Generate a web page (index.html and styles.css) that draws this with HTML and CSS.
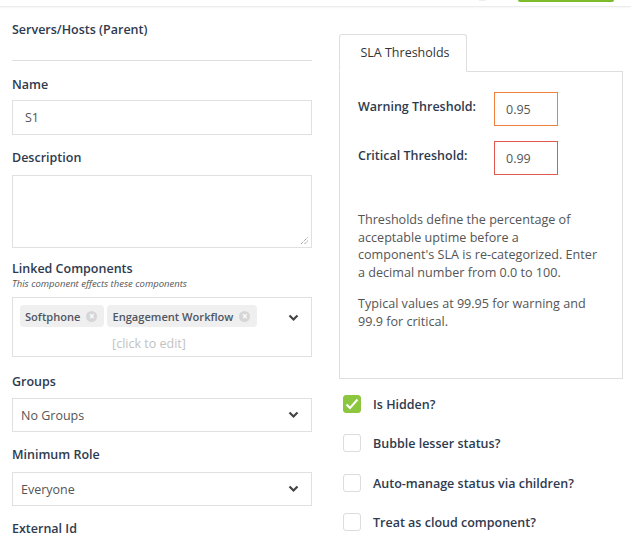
FILE: index.html
```html
<!DOCTYPE html>
<html>
<head>
<meta charset="utf-8">
<link rel="stylesheet" href="styles.css">
</head>
<body>
<div class="topbar">
  <span class="top-ghost"></span>
  <span class="top-btn"></span>
</div>
<div class="page">
  <div class="col-left">
    <div class="title">Servers/Hosts (Parent)</div>
    <div class="rule"></div>
    <div class="field f-name">
      <div class="label">Name</div>
      <div class="input">S1</div>
    </div>
    <div class="field f-desc">
      <div class="label">Description</div>
      <div class="textarea">
        <svg class="grip" width="9" height="9" viewBox="0 0 9 9"><path d="M1 8 L8 1 M4.5 8 L8 4.5" stroke="#777" stroke-width="1" stroke-dasharray="1 1" fill="none"/></svg>
      </div>
    </div>
    <div class="field f-linked">
      <div class="label">Linked Components</div>
      <div class="sublabel">This component effects these components</div>
      <div class="multi">
        <div class="chips">
          <span class="chip">Softphone <span class="chip-x">&#215;</span></span>
          <span class="chip">Engagement Workflow <span class="chip-x">&#215;</span></span>
        </div>
        <div class="click-edit">[click to edit]</div>
        <svg class="chev chev-multi" width="11" height="8" viewBox="0 0 11 8"><path d="M1.5 1.5 L5.5 5.5 L9.5 1.5" stroke="#444" stroke-width="2.2" fill="none"/></svg>
      </div>
    </div>
    <div class="field f-groups">
      <div class="label">Groups</div>
      <div class="select">
        <span>No Groups</span>
        <svg class="chev" width="11" height="8" viewBox="0 0 11 8"><path d="M1.5 1.5 L5.5 5.5 L9.5 1.5" stroke="#444" stroke-width="2.2" fill="none"/></svg>
      </div>
    </div>
    <div class="field f-role">
      <div class="label">Minimum Role</div>
      <div class="select">
        <span>Everyone</span>
        <svg class="chev" width="11" height="8" viewBox="0 0 11 8"><path d="M1.5 1.5 L5.5 5.5 L9.5 1.5" stroke="#444" stroke-width="2.2" fill="none"/></svg>
      </div>
    </div>
    <div class="field f-ext">
      <div class="label">External Id</div>
    </div>
  </div>
  <div class="col-right">
    <div class="tabs">
      <div class="tab">SLA Thresholds</div>
    </div>
    <div class="panel">
      <div class="thr-row">
        <div class="thr-label">Warning Threshold:</div>
        <div class="thr-input warn">0.95</div>
      </div>
      <div class="thr-row thr-row2">
        <div class="thr-label">Critical Threshold:</div>
        <div class="thr-input crit">0.99</div>
      </div>
      <p class="help">Thresholds define the percentage of<br>acceptable uptime before a<br>component's SLA is re-categorized. Enter<br>a decimal number from 0.0 to 100.</p>
      <p class="help help2">Typical values at 99.95 for warning and<br>99.9 for critical.</p>
    </div>
    <div class="checks">
      <div class="check-row">
        <span class="box checked"><svg width="14" height="12" viewBox="0 0 14 12"><path d="M1.5 6.5 L5 10 L12.5 1.5" stroke="#fff" stroke-width="2" fill="none"/></svg></span>
        <span class="check-label">Is Hidden?</span>
      </div>
      <div class="check-row">
        <span class="box"></span>
        <span class="check-label">Bubble lesser status?</span>
      </div>
      <div class="check-row">
        <span class="box"></span>
        <span class="check-label">Auto-manage status via children?</span>
      </div>
      <div class="check-row">
        <span class="box"></span>
        <span class="check-label">Treat as cloud component?</span>
      </div>
    </div>
  </div>
</div>
</body>
</html>
```
FILE: styles.css
```css
* { box-sizing: border-box; }
html, body { margin: 0; padding: 0; background: #fff; }
body {
  font-family: "Open Sans", "Noto Sans", sans-serif;
  color: #2e3a4e;
  font-size: 12.5px;
  overflow: hidden;
  height: 541px;
}
.topbar {
  height: 7px;
  border-bottom: 1px solid #ececec;
  box-shadow: 0 1px 2px rgba(0,0,0,0.04);
  display: flex;
  align-items: flex-start;
  overflow: hidden;
}
.top-ghost {
  margin-left: 479px;
  width: 7px;
  height: 1px;
  background: #eee;
}
.top-btn {
  margin-left: 32px;
  width: 96px;
  height: 2px;
  background: #7cbb2a;
  border-radius: 0 0 3px 3px;
}
.page {
  display: grid;
  grid-template-columns: 300px 284px;
  column-gap: 27px;
  padding-left: 12px;
}
.title {
  margin-top: 13px;
  line-height: 20px;
  font-size: 12.5px;
  font-weight: 600;
}
.rule {
  margin-top: 20px;
  height: 1px;
  background: #dedede;
}
.label {
  font-weight: 600;
  font-size: 12.5px;
  line-height: 18px;
}
.field { display: flex; flex-direction: column; }
.f-name { margin-top: 15px; }
.f-name .label { margin-bottom: 6px; }
.input {
  height: 35px;
  border: 1px solid #e0e0e0;
  padding: 0 12px;
  display: flex;
  align-items: center;
  color: #555;
  font-size: 12.5px;
}
.f-desc { margin-top: 14px; }
.f-desc .label { margin-bottom: 8px; }
.textarea {
  height: 73px;
  border: 1px solid #e0e0e0;
  position: relative;
}
.grip { position: absolute; right: 2px; bottom: 2px; }
.f-linked { margin-top: 12px; }
.sublabel {
  font-style: italic;
  font-size: 9.5px;
  line-height: 12px;
  color: #555;
  margin-top: 0;
  margin-bottom: 7px;
}
.multi {
  height: 60px;
  border: 1px solid #e0e0e0;
  position: relative;
  padding: 7px 7px 0;
}
.chips { display: flex; gap: 3px; }
.chip {
  background: #efefef;
  border-radius: 4px;
  height: 22px;
  padding: 0 7px 0 5px;
  display: inline-flex;
  align-items: center;
  gap: 6px;
  color: #4f5561;
  font-size: 11.1px;
  font-weight: 600;
}
.chip-x {
  width: 11px;
  height: 11px;
  border-radius: 50%;
  background: #d6d6d6;
  color: #fff;
  font-size: 10px;
  line-height: 11px;
  text-align: center;
  font-weight: 700;
}
.click-edit {
  text-align: center;
  color: #c2c2c2;
  font-size: 12.5px;
  line-height: 16px;
  margin-top: 9px;
  padding-right: 26px;
}
.chev-multi { position: absolute; right: 12px; top: 16px; }
.f-groups { margin-top: 16px; }
.f-groups .label { margin-bottom: 7px; }
.f-role .label { margin-bottom: 8px; }
.select {
  height: 34px;
  border: 1px solid #e0e0e0;
  padding: 0 12px 0 8px;
  display: flex;
  align-items: center;
  justify-content: space-between;
  color: #555;
}
.f-role { margin-top: 14px; }
.f-ext { margin-top: 14px; }

.col-right { padding-top: 27px; }
.tabs {
  display: flex;
  border-bottom: 1px solid #dedede;
}
.tab {
  width: 128px;
  height: 38px;
  margin-bottom: -1px;
  border: 1px solid #dedede;
  border-bottom-color: #fff;
  border-radius: 3px 3px 0 0;
  background: #fff;
  display: flex;
  align-items: center;
  justify-content: center;
  font-weight: 500;
  color: #333;
  padding-bottom: 1px;
  padding-left: 4px;
}
.panel {
  border: 1px solid #dedede;
  border-top: none;
  height: 307px;
  padding: 20px 18px 0 18px;
}
.thr-row { display: flex; }
.thr-row2 { margin-top: 15px; }
.thr-label {
  width: 136px;
  font-weight: 600;
  line-height: 18px;
  padding-top: 6px;
}
.thr-input {
  width: 64px;
  height: 34px;
  padding: 0 11px;
  display: flex;
  align-items: center;
  color: #555;
  font-size: 12.5px;
}
.warn { border: 1px solid #f0803c; }
.crit { border: 1px solid #e05a4e; }
.help {
  margin: 36px 0 0;
  line-height: 17.7px;
  color: #555;
  font-size: 12.6px;
  white-space: nowrap;
}
.help2 { margin-top: 13px; }
.checks { padding-top: 15px; padding-left: 4px; }
.check-row {
  display: flex;
  align-items: center;
  height: 39.5px;
  gap: 12px;
}
.check-row:first-child { margin-top: -10px; }
.box {
  width: 18px;
  height: 18px;
  border: 1px solid #dcdcdc;
  border-radius: 3px;
  display: flex;
  align-items: center;
  justify-content: center;
}
.box.checked { background: #8cc63f; border-color: #8cc63f; }
.check-label { font-weight: 600; padding-top: 1px; }
```
